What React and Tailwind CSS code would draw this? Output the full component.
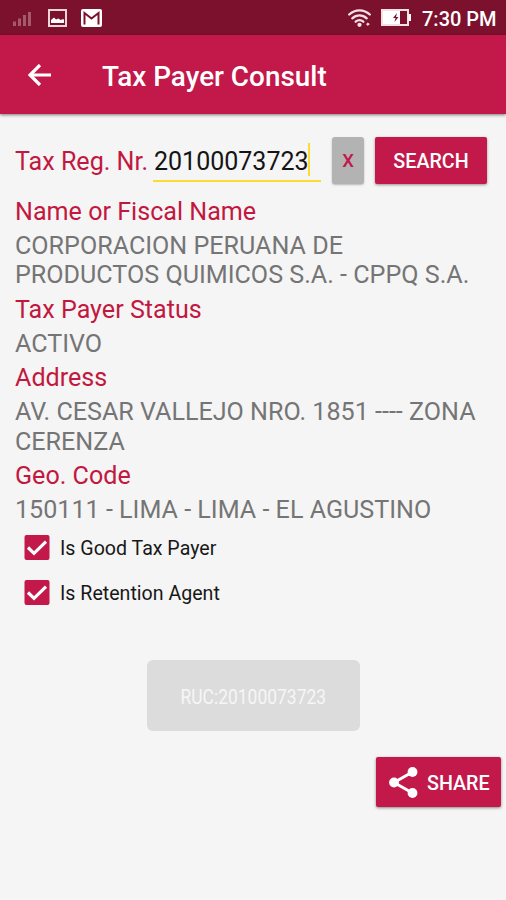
const fields = [
  { label: 'Name or Fiscal Name', lines: ['CORPORACION PERUANA DE', 'PRODUCTOS QUIMICOS S.A. - CPPQ S.A.'] },
  { label: 'Tax Payer Status', lines: ['ACTIVO'] },
  { label: 'Address', lines: ['AV. CESAR VALLEJO NRO. 1851 ---- ZONA', 'CERENZA'] },
  { label: 'Geo. Code', lines: ['150111 - LIMA - LIMA - EL AGUSTINO'] },
]

const StatusBar = () => (
  <div className="flex h-[35px] items-center bg-[#7c112d] pr-[11px] pl-[13px] text-white">
    <svg className="h-4 w-[18px]" viewBox="0 0 18 16" fill="#a4596d">
      <path d="M0 11.500h3V16H0zM5 8.500h3V16H5zM10 5h3v11h-3zM15 2h3v14h-3z" />
    </svg>
    <svg className="ml-[17px] h-[18px] w-[19px]" viewBox="0 0 19 18">
      <path d="M1 1h17v16H1z" fill="none" stroke="#eed5da" strokeWidth="2" />
      <path d="M3 14V11l3-2.500 2 2 2.500-1 2 1.500 3-1 .5 1v3z" fill="#fff" />
    </svg>
    <svg className="ml-[14px] h-[18px] w-[21px]" viewBox="0 0 21 18">
      <rect width="21" height="18" rx="2" fill="#fff" />
      <path d="M3.500 15.500V4l7 5.500 7-5.500v11.500" fill="none" stroke="#7c112d" strokeWidth="2" />
    </svg>
    <svg className="ml-auto h-[18px] w-[23px]" viewBox="0 0 23 18" fill="none" stroke="#f3dfe4" strokeWidth="2.300" strokeLinecap="round">
      <path d="M1.200 5.500C7-.1 16-.1 21.800 5.500M4.300 9.300c4-3.800 10.400-3.800 14.400 0M7.700 12.700c2.200-2 5.400-2 7.600 0" />
      <circle cx="11.500" cy="15.800" r="1" fill="#f3dfe4" />
      <circle cx="19.800" cy="15.200" r="1" fill="#f3dfe4" strokeWidth="1" />
    </svg>
    <svg className="ml-[10px] h-[17px] w-[30px]" viewBox="0 0 30 17">
      <path d="M1 1h26v15H1z" fill="none" stroke="#f3dfe4" strokeWidth="2" />
      <path d="M2 2h17v13H2zM27.500 5H30v7h-2.500z" fill="#fff" />
      <path d="M16 4l-4 5h2.500l-1 4 4-5H15z" fill="#7c112d" />
    </svg>
    <span className="ml-[11px] w-[73px] pt-[3px] text-[20px] leading-none font-medium whitespace-nowrap">7:30 PM</span>
  </div>
)

const CheckRow = ({ label }) => (
  <div className="flex h-[45px] items-center pl-[24px]">
    <svg className="h-[25px] w-[26px]" viewBox="0 0 26 25">
      <rect x=".5" width="25" height="25" rx="2" fill="#c2184a" />
      <path d="M4 12.500l6 5.800L22 6.600" fill="none" stroke="#fff" strokeWidth="3.200" />
    </svg>
    <span className="ml-[10px] pt-[2px] text-[19.600px] leading-none text-[#181818]">{label}</span>
  </div>
)

const App = () => {
  return (
    <div className="h-[900px] w-[506px] overflow-hidden bg-[#f5f5f5] font-['Roboto',sans-serif]">
      <StatusBar />
      <header className="flex h-[79px] items-center bg-[#c2184a] pl-[28px] text-white shadow-[0_1px_3px_rgba(0,0,0,0.5)]">
        <svg className="h-[22px] w-[23px]" viewBox="0 0 23 22" fill="none" stroke="currentColor" strokeWidth="3.200">
          <path d="M12 1L2 11l10 10M2 11h21" />
        </svg>
        <h1 className="ml-[51px] pt-[5px] text-[27.900px] leading-none font-medium">Tax Payer Consult</h1>
      </header>

      <main>
        <div className="flex h-[83px] items-start pt-[23px] pl-[15px]">
          <span className="mt-[10px] w-[138px] text-[25.100px] leading-[30px] whitespace-nowrap text-[#c2183f]">Tax Reg. Nr.</span>
          <div className="mt-[5px] flex h-[40px] w-[168px] items-start border-b-2 border-[#fcdb32]">
            <span className="mt-[5px] pl-px text-[25px] leading-[30px] text-[#141414]">20100073723</span>
            <span className="-ml-px mt-px h-[33px] w-[2px] bg-[#fcdb32]" />
          </div>
          <button className="ml-[11px] h-[47px] w-[32px] rounded-[3px] bg-[#b3b3b3] pt-[2px] text-[18.500px] font-medium text-[#c2184a] shadow-[0_1px_2px_rgba(0,0,0,0.25)]">X</button>
          <button className="ml-[11px] h-[47px] w-[112px] rounded-[2px] bg-[#c2184a] pt-[2px] text-[19.700px] font-medium text-white shadow-[0_1px_3px_rgba(0,0,0,0.4)]">SEARCH</button>
        </div>

        <dl className="h-[328px] -translate-y-[0.3px] pl-[15px] text-[25.120px] leading-[29.300px] whitespace-nowrap">
          {fields.map(field => (
            <div key={field.label}>
              <dt className="mb-[4.900px] text-[#c2183f]">{field.label}</dt>
              <dd className="mb-[4.900px] text-[#757575]">
                {field.lines.map(line => <div key={line}>{line}</div>)}
              </dd>
            </div>
          ))}
        </dl>

        <CheckRow label="Is Good Tax Payer" />
        <CheckRow label="Is Retention Agent" />

        <div className="mx-auto mt-[45px] flex h-[71px] w-[213px] items-center justify-center rounded-[6px] bg-[#dcdcdc]">
          <span className="scale-x-[0.895] pt-[4px] text-[19.500px] leading-none whitespace-nowrap text-[#f6f6f6]">RUC:20100073723</span>
        </div>

        <button className="mt-[26px] ml-[376px] flex h-[50px] w-[125px] items-center rounded-[2px] bg-[#c2184a] pl-[13px] text-white shadow-[0_1px_3px_rgba(0,0,0,0.45)]">
          <svg className="h-[31px] w-[29px]" viewBox="0 0 29 31" fill="#fff">
            <path d="M23.500 5L5 15.500 23.500 26" fill="none" stroke="#fff" strokeWidth="3" />
            <circle cx="23.500" cy="5" r="4.900" />
            <circle cx="5" cy="15.500" r="4.900" />
            <circle cx="23.500" cy="26" r="4.900" />
          </svg>
          <span className="ml-[9px] pt-[3px] text-[19.700px] leading-none font-medium">SHARE</span>
        </button>
      </main>
    </div>
  )
}

export default App
